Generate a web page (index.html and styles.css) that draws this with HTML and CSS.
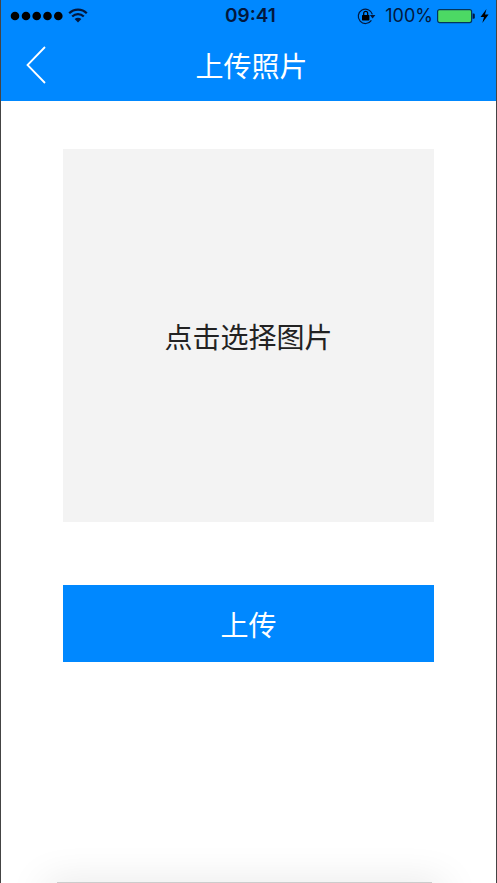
FILE: index.html
```html
<!DOCTYPE html>
<html lang="zh-CN">
<head>
    <meta charset="UTF-8">
    <meta name="viewport" content="width=device-width, initial-scale=1.0">
    <title>上传照片</title>
    <link rel="stylesheet" href="styles.css">
</head>
<body>
    <div class="app">
        <header class="header">
            <div class="status">
                <div class="status-left">
                    <svg width="54" height="16" viewBox="0 0 54 16" aria-hidden="true">
                        <circle cx="5" cy="8" r="4.3"/>
                        <circle cx="16" cy="8" r="4.3"/>
                        <circle cx="26.7" cy="8" r="4.3"/>
                        <circle cx="37.5" cy="8" r="4.3"/>
                        <circle cx="48.3" cy="8" r="4.3"/>
                    </svg>
                    <svg width="20" height="16" viewBox="0 0 20 16" aria-hidden="true">
                        <path d="M1.2 5.3 C6 .3 14 .3 18.8 5.3" fill="none" stroke="#03183d" stroke-width="2.2"/>
                        <path d="M4.2 8.6 C7.5 5.2 12.5 5.2 15.8 8.6" fill="none" stroke="#03183d" stroke-width="2.2"/>
                        <path d="M6.6 11 C8.6 9.2 11.4 9.2 13.4 11 L10 14.6 Z" fill="#03183d"/>
                    </svg>
                </div>
                <time class="time">09:41</time>
                <div class="status-right">
                    <svg width="19" height="18" viewBox="0 0 19 18" aria-hidden="true">
                        <path d="M14.4 13.4 A7.2 7.2 0 1 1 15.4 7.4" fill="none" stroke="#03183d" stroke-width="1.2"/>
                        <path d="M12.8 8 H18.4 L15.6 11.4 Z" fill="#03183d"/>
                        <rect x="5" y="8" width="7.4" height="5.4" rx=".6"/>
                        <path d="M6.7 8.3 V6.4 a2 2 0 0 1 4 0 V8.3" fill="none" stroke="#000" stroke-width="1.2"/>
                    </svg>
                    <span class="percent">100%</span>
                    <svg width="38" height="16" viewBox="0 0 38 16" aria-hidden="true">
                        <rect x=".6" y="1.6" width="34" height="13" rx="2" fill="#4cd964" stroke="#03355f" stroke-width="1.2"/>
                        <path d="M35.6 5.5 h1 q1.2 0 1.2 1.2 v2.8 q0 1.2 -1.2 1.2 h-1 Z" fill="#03183d"/>
                    </svg>
                    <svg class="bolt" width="9" height="16" viewBox="0 0 9 16" aria-hidden="true">
                        <path d="M6.5 1 L.5 9 H4 L2.3 15 L8.6 6.6 H5 Z"/>
                    </svg>
                </div>
            </div>
            <div class="navbar">
                <button class="back" type="button" aria-label="返回">
                    <svg width="20" height="38" viewBox="0 0 20 38" aria-hidden="true">
                        <path d="M19 1 L1.5 19 L19 37" fill="none" stroke="#fff" stroke-width="1.8"/>
                    </svg>
                </button>
                <h1 class="title">上传照片</h1>
            </div>
        </header>
        <main class="content">
            <button class="picker" type="button">点击选择图片</button>
            <button class="upload" type="button">上传</button>
        </main>
        <div class="bottom-edge"></div>
    </div>
</body>
</html>
```

FILE: styles.css
```css
* { box-sizing: border-box; }
body { margin: 0; background-color: #fff; font-family: "Noto Sans CJK SC", sans-serif; font-weight: 400; }
button { border: 0; padding: 0; font: inherit; cursor: pointer; }
svg { display: block; flex: none; }
.app { display: flex; flex-direction: column; min-height: 100vh; overflow: hidden; border: solid #444; border-width: 0 1px; }
.header { background-color: #08f; color: #fff; }
.status { display: grid; grid-template-columns: 1fr auto 1fr; align-items: center; height: 32px; padding: 0 7px 0 9px; color: #03183d; font-family: Inter, sans-serif; font-size: 18px; line-height: 32px; }
.status-left { display: flex; align-items: center; gap: 4px; }
.status-right { display: flex; align-items: center; justify-content: flex-end; gap: 4px; }
.time { padding-left: 2px; font-size: 19px; font-weight: 600; }
.percent { margin-left: 5px; font-weight: 400; }
.bolt { margin-left: 1px; }
.navbar { display: grid; grid-template-columns: 48px 1fr 42px; align-items: center; height: 69px; padding-bottom: 3px; }
.back { display: flex; justify-content: flex-end; align-items: center; height: 66px; padding-right: 3px; background: none; }
.title { margin: 0; font-size: 28px; font-weight: 400; line-height: 40px; text-align: center; }
.content { display: flex; flex: 1; flex-direction: column; gap: 63px; padding: 48px 62px; }
.picker { width: 100%; aspect-ratio: 371 / 373; background-color: #f3f3f3; color: #222; font-size: 28px; line-height: 40px; }
.upload { width: 100%; height: 77px; background-color: #08f; color: #fff; font-size: 28px; line-height: 40px; }
.bottom-edge { height: 1px; margin: 0 64px 0 56px; background-color: #ccc; box-shadow: 0 14px 40px 12px rgba(0, 0, 0, 0.12); }
```
